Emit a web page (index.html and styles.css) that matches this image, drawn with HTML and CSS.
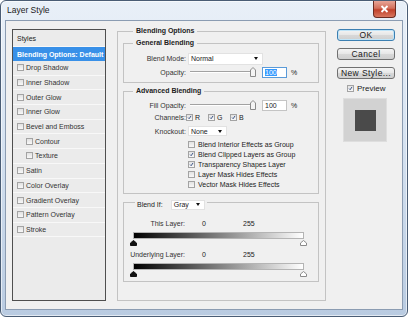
FILE: index.html
```html
<!DOCTYPE html>
<html lang="en">
<head>
  <meta charset="UTF-8" />
  <meta name="viewport" content="width=device-width, initial-scale=1.0"/>
  <title>Layer Style</title>
  <link rel="stylesheet" href="styles.css">
</head>
<body>
  <div class="window">
    <!-- Title Bar -->
    <div class="titlebar">
      <span class="title">Layer Style</span>
      <span class="close">
        <svg width="9" height="8" viewBox="0 0 9 8"><path d="M1.5 1 L7.5 7 M7.5 1 L1.5 7" stroke="#fff" stroke-width="1.8"/></svg>
      </span>
    </div>

    <div class="client">
      <!-- Styles List -->
      <div class="styles-list">
        <div class="list-head">Styles</div>
        <div class="list-row selected">Blending Options: Default</div>
        <div class="list-row"><span class="cb"></span>Drop Shadow</div>
        <div class="list-row"><span class="cb"></span>Inner Shadow</div>
        <div class="list-row"><span class="cb"></span>Outer Glow</div>
        <div class="list-row"><span class="cb"></span>Inner Glow</div>
        <div class="list-row"><span class="cb"></span>Bevel and Emboss</div>
        <div class="list-row indent"><span class="cb"></span>Contour</div>
        <div class="list-row indent"><span class="cb"></span>Texture</div>
        <div class="list-row"><span class="cb"></span>Satin</div>
        <div class="list-row"><span class="cb"></span>Color Overlay</div>
        <div class="list-row"><span class="cb"></span>Gradient Overlay</div>
        <div class="list-row"><span class="cb"></span>Pattern Overlay</div>
        <div class="list-row"><span class="cb"></span>Stroke</div>
      </div>

      <!-- Blending Options -->
      <div class="group outer">
        <div class="group-title">Blending Options</div>

        <div class="group general">
          <div class="group-title">General Blending</div>
          <div class="row row-mode">
            <span class="label">Blend Mode:</span>
            <div class="select select-mode">Normal<span class="arrow"></span></div>
          </div>
          <div class="row row-opacity">
            <span class="label">Opacity:</span>
            <div class="slider">
              <span class="track"></span>
              <svg class="thumb" width="6" height="10" viewBox="0 0 6 10"><path d="M0.5 3 L3 0.5 L5.5 3 V9.5 H0.5 Z" fill="#f4f4f4" stroke="#8a8a8a"/></svg>
            </div>
            <div class="num focus"><span class="sel">100</span></div>
            <span class="pct">%</span>
          </div>
        </div>

        <div class="group advanced">
          <div class="group-title">Advanced Blending</div>
          <div class="row row-fill">
            <span class="label">Fill Opacity:</span>
            <div class="slider">
              <span class="track"></span>
              <svg class="thumb" width="6" height="10" viewBox="0 0 6 10"><path d="M0.5 3 L3 0.5 L5.5 3 V9.5 H0.5 Z" fill="#f4f4f4" stroke="#8a8a8a"/></svg>
            </div>
            <div class="num">100</div>
            <span class="pct">%</span>
          </div>
          <div class="row row-channels">
            <span class="label">Channels:</span>
            <span class="channel"><span class="cb on"><svg viewBox="0 0 7 7"><path d="M1.5 3.6 L3 5.2 L5.6 1.3"/></svg></span>R</span>
            <span class="channel"><span class="cb on"><svg viewBox="0 0 7 7"><path d="M1.5 3.6 L3 5.2 L5.6 1.3"/></svg></span>G</span>
            <span class="channel"><span class="cb on"><svg viewBox="0 0 7 7"><path d="M1.5 3.6 L3 5.2 L5.6 1.3"/></svg></span>B</span>
          </div>
          <div class="row row-knockout">
            <span class="label">Knockout:</span>
            <div class="select select-knock">None<span class="arrow"></span></div>
          </div>
          <div class="checks">
            <div class="check"><span class="cb"></span>Blend Interior Effects as Group</div>
            <div class="check"><span class="cb on"><svg viewBox="0 0 7 7"><path d="M1.5 3.6 L3 5.2 L5.6 1.3"/></svg></span>Blend Clipped Layers as Group</div>
            <div class="check"><span class="cb on"><svg viewBox="0 0 7 7"><path d="M1.5 3.6 L3 5.2 L5.6 1.3"/></svg></span>Transparency Shapes Layer</div>
            <div class="check"><span class="cb"></span>Layer Mask Hides Effects</div>
            <div class="check"><span class="cb"></span>Vector Mask Hides Effects</div>
          </div>
        </div>

        <div class="group blendif">
          <div class="blendif-title">
            <span>Blend If:</span>
            <div class="select select-gray">Gray<span class="arrow"></span></div>
          </div>
          <div class="row range-row first">
            <span class="label">This Layer:</span>
            <span class="low">0</span><span>255</span>
          </div>
          <div class="ramp"></div>
          <div class="markers">
            <svg width="7" height="6" viewBox="0 0 7 6"><path d="M3.5 0.5 L6.5 3 V5.5 H0.5 V3 Z" fill="#111" stroke="#111"/></svg>
            <svg width="7" height="6" viewBox="0 0 7 6"><path d="M3.5 0.5 L6.5 3 V5.5 H0.5 V3 Z" fill="#fff" stroke="#8a8a8a"/></svg>
          </div>
          <div class="row range-row">
            <span class="label">Underlying Layer:</span>
            <span class="low">0</span><span>255</span>
          </div>
          <div class="ramp"></div>
          <div class="markers">
            <svg width="7" height="6" viewBox="0 0 7 6"><path d="M3.5 0.5 L6.5 3 V5.5 H0.5 V3 Z" fill="#111" stroke="#111"/></svg>
            <svg width="7" height="6" viewBox="0 0 7 6"><path d="M3.5 0.5 L6.5 3 V5.5 H0.5 V3 Z" fill="#fff" stroke="#8a8a8a"/></svg>
          </div>
        </div>
      </div>

      <!-- Buttons and Preview -->
      <div class="side">
        <div class="btn default">OK</div>
        <div class="btn">Cancel</div>
        <div class="btn">New Style...</div>
        <div class="preview-row">
          <span class="cb on"><svg viewBox="0 0 7 7"><path d="M1.5 3.6 L3 5.2 L5.6 1.3"/></svg></span>Preview
        </div>
        <div class="swatch"><span class="swatch-inner"></span></div>
      </div>
    </div>
  </div>
</body>
</html>
```

FILE: styles.css
```css
/* Reset and Base Styles */
* {
  margin: 0;
  padding: 0;
  box-sizing: border-box;
}
body {
  font-family: "Liberation Sans", Arial, sans-serif;
  font-size: 7px;
  color: #222;
  background-color: #fff;
}

/* Window Frame */
.window {
  width: 408px;
  height: 317px;
  border: 1px solid #4a5d75;
  border-radius: 6px;
  padding: 0 4px 6px;
  background: linear-gradient(#e9f0f8, #d8e4f2 40%, #b9cbe1);
  box-shadow: inset 0 0 0 1px rgba(255, 255, 255, 0.6);
}
.titlebar {
  height: 19px;
  margin: 0 -4px;
  display: flex;
  align-items: flex-start;
}
.title {
  font-size: 8.5px;
  line-height: 19px;
  padding-left: 6px;
  color: #1b1b1b;
}
.close {
  margin-left: auto;
  margin-right: 11px;
  width: 23px;
  height: 17px;
  display: flex;
  align-items: center;
  justify-content: center;
  border: 1px solid #6b2c22;
  border-top: none;
  border-radius: 0 0 4px 4px;
  background: linear-gradient(#e8a597, #d3705c 45%, #c0402a 55%, #d8765f);
}

/* Client Area */
.client {
  height: 290px;
  border: 1px solid #8b9cb2;
  background-color: #f0f0f0;
  display: flex;
  align-items: flex-start;
  padding: 8px 0 0 6px;
}

/* Styles List */
.styles-list {
  width: 94px;
  height: 272px;
  border: 1px solid #4f4f4f;
  background-color: #ebebeb;
  flex-shrink: 0;
}
.list-head {
  height: 17px;
  line-height: 17px;
  padding-left: 4px;
  border-bottom: 1px solid #f8f8f8;
}
.list-row {
  height: 14.7px;
  display: flex;
  align-items: center;
  padding-left: 4px;
  border-bottom: 1px solid #f8f8f8;
  color: #333;
}
.list-row.selected {
  height: 14px;
  background-color: #3890e8;
  color: #fff;
  font-weight: bold;
  border-bottom: none;
}
.list-row.indent {
  padding-left: 13px;
}

/* Checkboxes */
.cb {
  width: 7px;
  height: 7px;
  flex-shrink: 0;
  margin-right: 2px;
  border: 1px solid #a3a3a3;
  background: linear-gradient(#e2e2e2, #f8f8f8);
  display: inline-flex;
}
.cb svg {
  width: 100%;
  height: 100%;
  overflow: visible;
}
.cb path {
  fill: none;
  stroke: #23407a;
  stroke-width: 1.2;
}

/* Group Boxes */
.group {
  border: 1px solid #c3c3c3;
}
.group-title {
  width: fit-content;
  line-height: 10px;
  margin: -6px 0 0 9px;
  padding: 0 3px;
  background-color: #f0f0f0;
  font-weight: bold;
}
.outer {
  width: 209px;
  height: 270px;
  margin: 2px 0 0 11px;
  padding-left: 5px;
  flex-shrink: 0;
}
.outer > .group-title {
  margin-left: 10px;
}
.general {
  width: 196px;
  height: 40px;
  margin-top: 7px;
}
.advanced {
  width: 196px;
  height: 103px;
  margin-top: 8px;
}
.blendif {
  width: 196px;
  height: 80px;
  margin-top: 8px;
}

/* Rows */
.row {
  display: flex;
  align-items: center;
}
.label {
  width: 62px;
  text-align: right;
  flex-shrink: 0;
  color: #333;
}
.row-mode {
  height: 13px;
  margin-top: 4px;
}
.row-opacity {
  height: 12px;
  margin-top: 1px;
}
.select {
  margin-left: 2px;
  height: 12px;
  background-color: #fff;
  border: 1px solid #e2e2e2;
  padding-left: 2px;
  display: flex;
  align-items: center;
}
.arrow {
  margin-left: auto;
  margin-right: 4px;
  border-left: 2.5px solid transparent;
  border-right: 2.5px solid transparent;
  border-top: 3px solid #111;
}
.select-mode {
  width: 75px;
}
.select-knock {
  width: 39px;
  height: 10px;
}
.select-gray {
  width: 34px;
  height: 10px;
  margin-left: 8px;
}

/* Sliders and Number Fields */
.slider {
  width: 66px;
  height: 10px;
  margin-left: 4px;
  display: flex;
  align-items: center;
}
.track {
  flex: 1;
  height: 2px;
  border-top: 1px solid #a2a2a2;
  border-bottom: 1px solid #fff;
}
.thumb {
  margin-left: -2px;
}
.num {
  width: 25px;
  height: 11px;
  margin-left: 6px;
  padding-left: 2px;
  background-color: #fff;
  border: 1px solid #c4c4c4;
  display: flex;
  align-items: center;
}
.num.focus {
  border-color: #5a9ad8;
}
.sel {
  background-color: #3399ff;
  color: #fff;
}
.pct {
  margin-left: 4px;
}

/* Advanced Blending */
.row-fill {
  height: 12px;
  margin-top: 3px;
}
.row-channels {
  height: 13px;
}
.channel {
  width: 22px;
  display: flex;
  align-items: center;
}
.row-channels .channel:first-of-type {
  margin-left: 2px;
}
.row-knockout {
  height: 14px;
}
.checks {
  margin: 1px 0 0 64px;
}
.check {
  height: 10px;
  display: flex;
  align-items: center;
}
.check .cb {
  margin-right: 3px;
}

/* Blend If */
.blendif-title {
  width: fit-content;
  height: 11px;
  margin: -4px 0 0 11px;
  padding: 0 2px;
  display: flex;
  align-items: center;
  background-color: #f0f0f0;
}
.range-row {
  height: 10px;
  margin-top: 3px;
}
.range-row.first {
  margin-top: 8px;
}
.range-row .label {
  width: 61px;
}
.range-row .low {
  width: 41px;
  margin-left: 17px;
}
.ramp {
  width: 171px;
  height: 7px;
  margin: 3px 0 0 9px;
  border: 1px solid #b4b4b4;
  background: linear-gradient(to right, #000, #fff);
}
.range-row + .ramp {
  margin-top: 4px;
}
.markers {
  width: 177px;
  height: 6px;
  margin: 1px 0 0 6px;
  display: flex;
  justify-content: space-between;
}
.markers svg {
  display: block;
}

/* Buttons and Preview */
.side {
  width: 58px;
  margin-left: 11px;
  flex-shrink: 0;
}
.btn {
  height: 12px;
  margin-bottom: 7px;
  display: flex;
  align-items: center;
  justify-content: center;
  font-size: 8.5px;
  letter-spacing: 0.4px;
  color: #1a1a1a;
  border: 1px solid #707070;
  border-radius: 3px;
  background: linear-gradient(#f4f4f4, #e6e6e6 50%, #d8d8d8 51%, #cfcfcf);
}
.btn.default {
  border-color: #3c7fb1;
  box-shadow: inset 0 0 0 1px #bfe4f8;
}
.preview-row {
  height: 11px;
  margin-top: -3px;
  padding-left: 10px;
  display: flex;
  align-items: center;
  font-size: 8px;
}
.preview-row .cb {
  margin-right: 3px;
}
.swatch {
  width: 44px;
  height: 44px;
  margin: 4px 0 0 6px;
  display: flex;
  align-items: center;
  justify-content: center;
  background-color: #d2d2d2;
  border: 1px solid #dedede;
}
.swatch-inner {
  width: 21px;
  height: 21px;
  background-color: #4a4a4a;
}
```
